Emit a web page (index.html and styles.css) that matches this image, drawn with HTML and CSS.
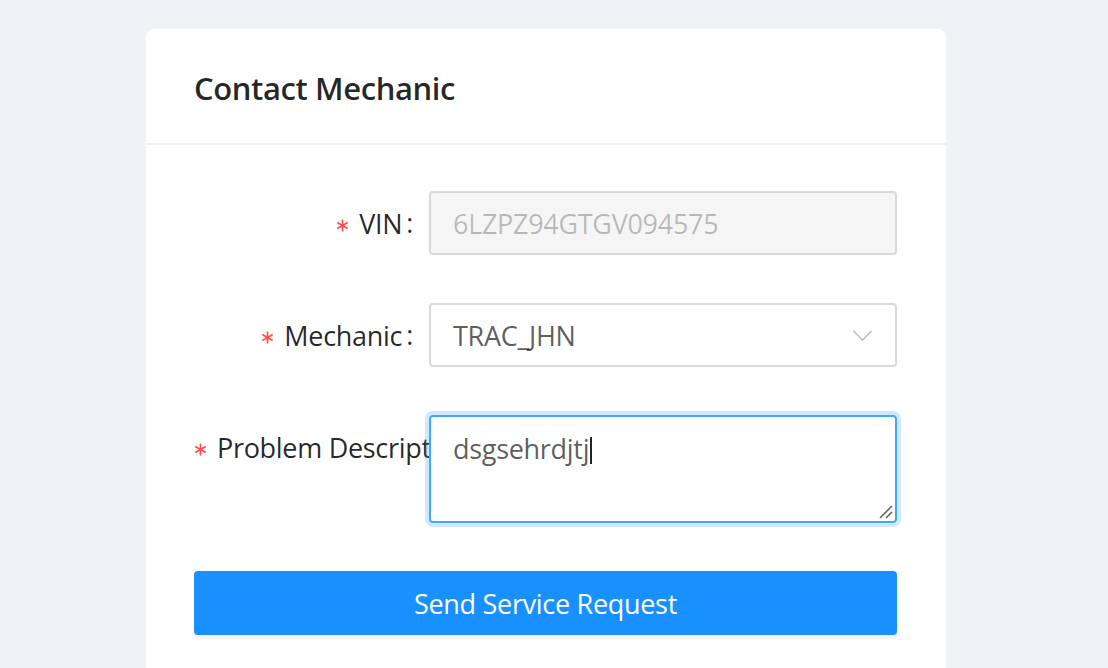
FILE: index.html
```html
<!DOCTYPE html>
<html lang="en">
<head>
<meta charset="utf-8">
<title>Contact Mechanic</title>
<link rel="stylesheet" href="styles.css">
</head>
<body>
<div class="page">
  <div class="card">
    <div class="card-head">
      <div class="card-title">Contact Mechanic</div>
    </div>
    <div class="card-body">
      <form class="form">
        <div class="form-item">
          <div class="label-col"><label class="label required"><svg class="star" viewBox="0 0 12 12"><path d="M6 0.5V11.5M1.2 3.2L10.8 8.8M10.8 3.2L1.2 8.8"/></svg>VIN</label></div>
          <div class="control-col"><div class="input disabled">6LZPZ94GTGV094575</div></div>
        </div>
        <div class="form-item">
          <div class="label-col"><label class="label required"><svg class="star" viewBox="0 0 12 12"><path d="M6 0.5V11.5M1.2 3.2L10.8 8.8M10.8 3.2L1.2 8.8"/></svg>Mechanic</label></div>
          <div class="control-col">
            <div class="input select"><span class="select-value">TRAC_JHN</span><svg class="arrow" viewBox="0 0 20 11"><path d="M1 1L10 10L19 1"/></svg></div>
          </div>
        </div>
        <div class="form-item">
          <div class="label-col"><label class="label required"><svg class="star" viewBox="0 0 12 12"><path d="M6 0.5V11.5M1.2 3.2L10.8 8.8M10.8 3.2L1.2 8.8"/></svg>Problem Description</label></div>
          <div class="control-col">
            <div class="textarea focused"><span class="ta-text">dsgsehrdjtj</span><span class="caret"></span><svg class="resize" viewBox="0 0 16 16"><path d="M15 3L3 15M15 9L9 15"/></svg></div>
          </div>
        </div>
        <button type="button" class="btn-primary">Send Service Request</button>
      </form>
    </div>
  </div>
</div>
</body>
</html>
```
FILE: styles.css
```css
html, body {
  margin: 0;
  padding: 0;
  background: #f0f2f5;
  font-family: "Open Sans", "Noto Sans", sans-serif;
  overflow: hidden;
}
.page {
  padding: 29px 0 0 146px;
  height: 668px;
  box-sizing: border-box;
}
.card {
  width: 800px;
  height: 700px;
  background: #fff;
  border-radius: 8px;
}
.card-head {
  height: 114px;
  padding: 0 48px;
  border-bottom: 2px solid #f0f0f0;
  display: flex;
  align-items: center;
}
.card-title {
  font-size: 31px;
  font-weight: 600;
  color: rgba(0,0,0,.85);
  letter-spacing: -0.4px;
  padding-top: 3px;
}
.card-body {
  padding: 46px 48px 48px;
}
.form-item {
  display: grid;
  grid-template-columns: 235px 468px;
  margin-bottom: 48px;
}
.label-col {
  overflow: hidden;
  white-space: nowrap;
  text-align: right;
  height: 64px;
}
.label {
  display: inline-flex;
  align-items: center;
  height: 64px;
  font-size: 27px;
  color: rgba(0,0,0,.85);
  letter-spacing: -0.3px;
}
.label::after {
  content: ":";
  margin: 0 16px 0 4px;
  position: relative;
  top: -1px;
}
.star {
  width: 13px;
  height: 13px;
  margin-right: 10px;
  fill: none;
  stroke: #ff4d4f;
  stroke-width: 1.6;
  position: relative;
  top: 2px;
}
.input {
  box-sizing: border-box;
  height: 64px;
  border: 2px solid #d9d9d9;
  border-radius: 4px;
  padding: 0 22px;
  display: flex;
  align-items: center;
  font-size: 27px;
  color: rgba(0,0,0,.65);
  letter-spacing: -0.3px;
}
.input.disabled {
  background: #f5f5f5;
  color: rgba(0,0,0,.25);
}
.select {
  justify-content: space-between;
}
.arrow {
  width: 21px;
  height: 11px;
  fill: none;
  stroke: #bfbfbf;
  stroke-width: 1.7;
  margin-right: 0;
}
.textarea {
  box-sizing: border-box;
  height: 108px;
  border: 2px solid #40a9ff;
  border-radius: 4px;
  box-shadow: 0 0 0 4px rgba(24,144,255,.2);
  padding: 10px 22px;
  font-size: 27px;
  line-height: 44px;
  color: rgba(0,0,0,.65);
  letter-spacing: -0.3px;
  position: relative;
}
.caret {
  display: inline-block;
  width: 2px;
  height: 27px;
  background: #222;
  vertical-align: -5px;
  margin-left: 1px;
}
.resize {
  position: absolute;
  right: 2px;
  bottom: 2px;
  width: 16px;
  height: 16px;
  fill: none;
  stroke: #666;
  stroke-width: 1.6;
}
.btn-primary {
  display: block;
  width: 703px;
  height: 64px;
  border: none;
  border-radius: 4px;
  background: #1890ff;
  color: #fff;
  font-family: "Open Sans", "Noto Sans", sans-serif;
  font-size: 27px;
  letter-spacing: -0.3px;
  box-shadow: 0 4px 0 rgba(0,0,0,.045);
  padding: 0;
}
```
